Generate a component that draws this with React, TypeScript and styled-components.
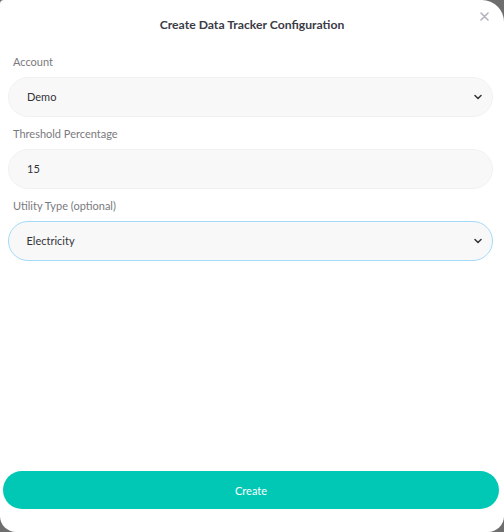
import styled, { createGlobalStyle } from "styled-components";

const GlobalStyle = createGlobalStyle`
  html, body {
    margin: 0;
    padding: 0;
    background: #6e6e6e;
  }
  * {
    box-sizing: border-box;
  }
`;

const Modal = styled.div`
  position: relative;
  width: 504px;
  height: 532px;
  background: #ffffff;
  border-radius: 4px 22px 16px 16px;
  display: flex;
  flex-direction: column;
  font-family: Lato, "Open Sans", sans-serif;
  overflow: hidden;
`;

const Header = styled.div`
  height: 48px;
  display: flex;
  align-items: center;
  justify-content: center;
`;

const Title = styled.h2`
  margin: 0;
  font-size: 12.2px;
  font-weight: 700;
  color: #3b3b46;
`;

const CloseButton = styled.button`
  position: absolute;
  top: 11px;
  right: 15px;
  width: 10px;
  height: 10px;
  padding: 0;
  border: none;
  background: none;
  display: flex;
  align-items: center;
  justify-content: center;
  cursor: pointer;
`;

const Form = styled.div`
  display: flex;
  flex-direction: column;
  gap: 10px;
  padding: 7px 11px 0 8px;
`;

const Field = styled.div`
  display: flex;
  flex-direction: column;
`;

const Label = styled.label`
  font-size: 11px;
  line-height: 14px;
  color: #7a7a7e;
  padding-left: 5px;
  margin-bottom: 8px;
`;

const Control = styled.div<{ $focused?: boolean }>`
  height: 40px;
  border-radius: 20px;
  background: #f8f8f8;
  border: ${(p) => (p.$focused ? "1.5px solid #a3daf7" : "1px solid #f1f1f1")};
  display: flex;
  align-items: center;
  justify-content: space-between;
  padding: 0 8px 1px ${(p) => (p.$focused ? "17.5px" : "18px")};
  font-size: 11px;
  color: #333338;
`;

const Spacer = styled.div`
  flex: 1;
`;

const SubmitButton = styled.button`
  margin: 0 5px 23px 3px;
  height: 38px;
  border: none;
  border-radius: 19px;
  background: #00c8b4;
  color: #ffffff;
  font-family: Lato, "Open Sans", sans-serif;
  font-size: 11px;
  font-weight: 400;
  cursor: pointer;
`;

const Chevron = () => (
  <svg width="12" height="12" viewBox="0 0 12 12" fill="none">
    <path d="M3 4.5 L6 7.5 L9 4.5" stroke="#3a3a40" strokeWidth="1.6" strokeLinecap="round" strokeLinejoin="round" />
  </svg>
);

const CloseIcon = () => (
  <svg width="9" height="9" viewBox="0 0 9 9" fill="none">
    <path d="M1 1 L8 8 M8 1 L1 8" stroke="#b3b3bf" strokeWidth="1.6" strokeLinecap="round" />
  </svg>
);

export default function App() {
  return (
    <>
      <GlobalStyle />
      <Modal>
        <CloseButton aria-label="Close">
          <CloseIcon />
        </CloseButton>
        <Header>
          <Title>Create Data Tracker Configuration</Title>
        </Header>
        <Form>
          <Field>
            <Label>Account</Label>
            <Control>
              <span>Demo</span>
              <Chevron />
            </Control>
          </Field>
          <Field>
            <Label>Threshold Percentage</Label>
            <Control>
              <span>15</span>
            </Control>
          </Field>
          <Field>
            <Label>Utility Type (optional)</Label>
            <Control $focused>
              <span>Electricity</span>
              <Chevron />
            </Control>
          </Field>
        </Form>
        <Spacer />
        <SubmitButton>Create</SubmitButton>
      </Modal>
    </>
  );
}
